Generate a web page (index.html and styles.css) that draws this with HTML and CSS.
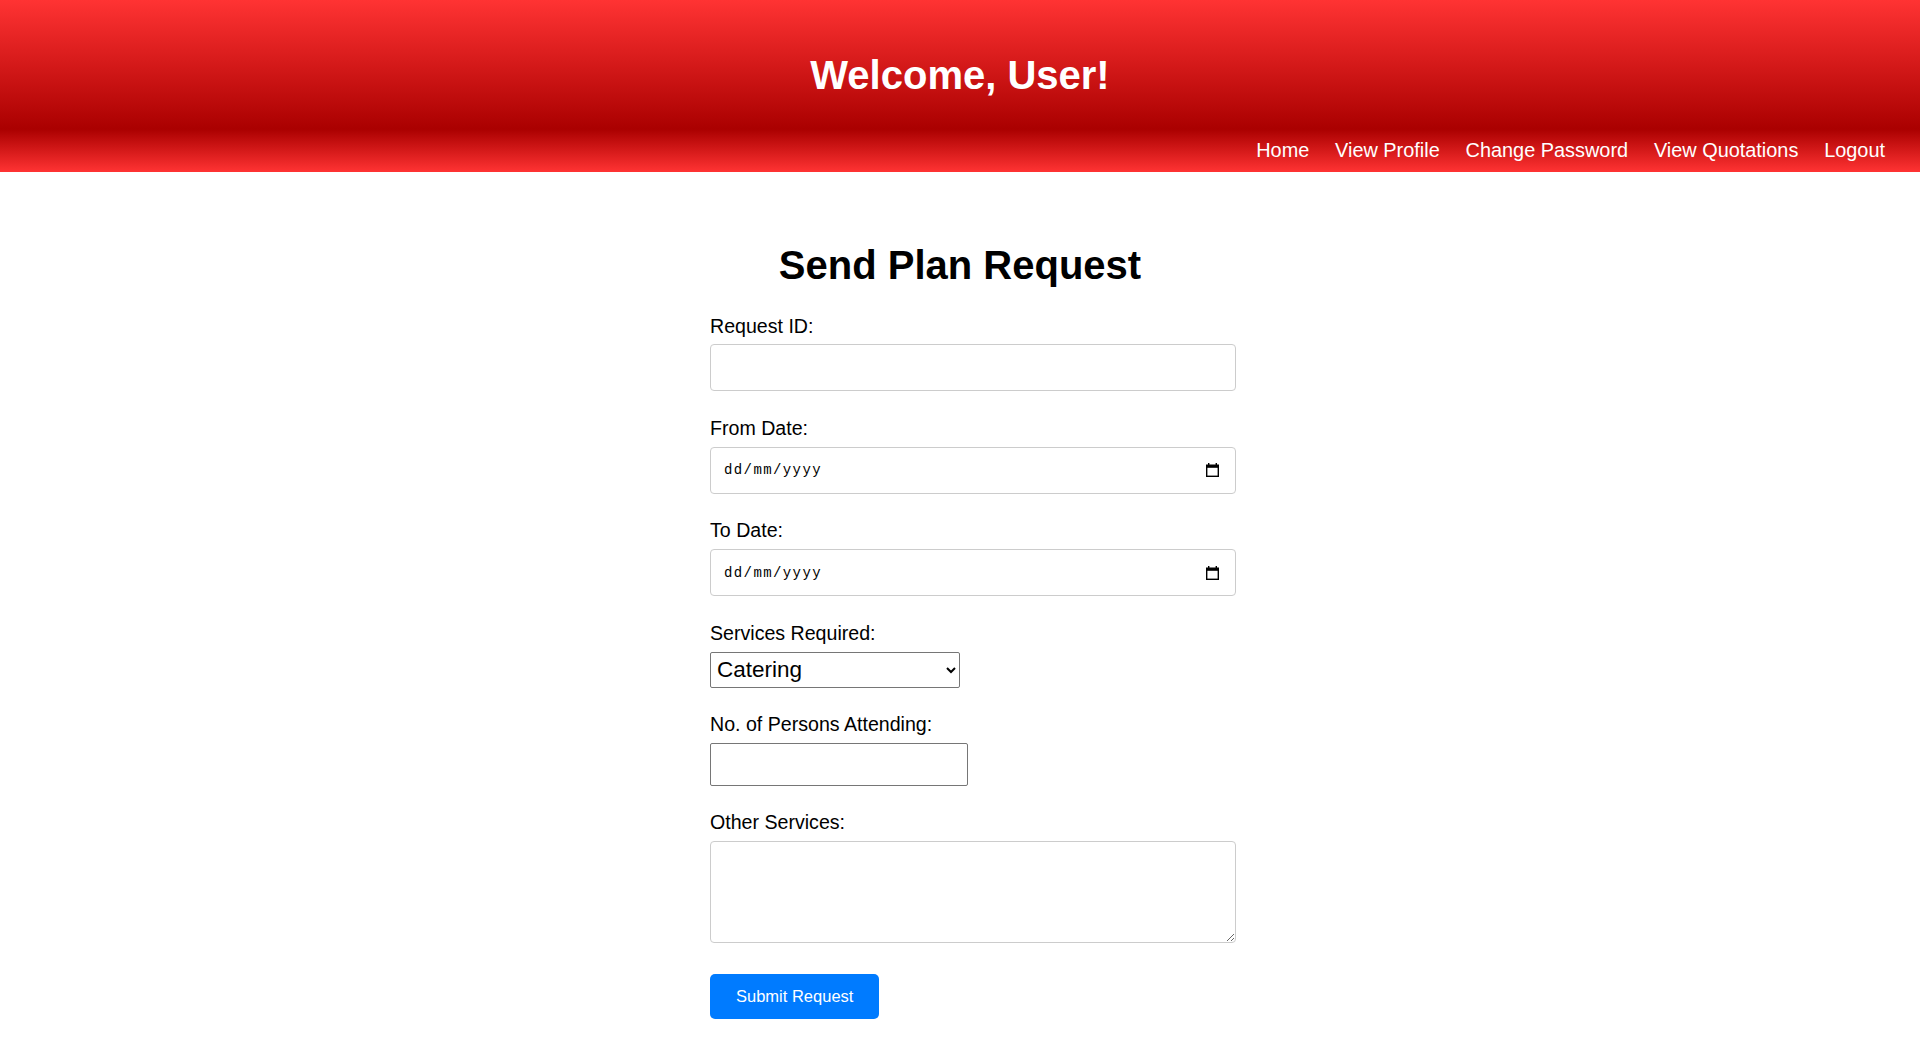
FILE: index.html
```html
<!DOCTYPE html>
<html lang="en">
<head>
<meta charset="utf-8">
<title>Send Plan Request</title>
<link rel="stylesheet" href="styles.css">
</head>
<body>
<header class="header">
  <h1 class="header-title">Welcome, User!</h1>
</header>
<nav class="nav">
  <a class="nav-link" href="#">Home</a>
  <a class="nav-link" href="#">View Profile</a>
  <a class="nav-link" href="#">Change Password</a>
  <a class="nav-link" href="#">View Quotations</a>
  <a class="nav-link" href="#">Logout</a>
</nav>
<main class="main">
  <h2 class="page-title">Send Plan Request</h2>
  <form class="form">
    <label class="label" for="rid">Request ID:</label>
    <input class="field" id="rid" type="text">

    <label class="label" for="from">From Date:</label>
    <div class="date-wrap">
      <input class="field date" id="from" type="text" placeholder="dd/mm/yyyy">
      <svg class="cal-icon" width="13" height="14" viewBox="0 0 13 14" aria-hidden="true">
        <rect x="2" y="0" width="1.4" height="2.5" fill="#000"/>
        <rect x="9.6" y="0" width="1.4" height="2.5" fill="#000"/>
        <rect x="0.7" y="2.2" width="11.6" height="11.1" fill="none" stroke="#000" stroke-width="1.4"/>
        <rect x="0.7" y="2.2" width="11.6" height="2.6" fill="#000"/>
      </svg>
    </div>

    <label class="label" for="to">To Date:</label>
    <div class="date-wrap">
      <input class="field date" id="to" type="text" placeholder="dd/mm/yyyy">
      <svg class="cal-icon" width="13" height="14" viewBox="0 0 13 14" aria-hidden="true">
        <rect x="2" y="0" width="1.4" height="2.5" fill="#000"/>
        <rect x="9.6" y="0" width="1.4" height="2.5" fill="#000"/>
        <rect x="0.7" y="2.2" width="11.6" height="11.1" fill="none" stroke="#000" stroke-width="1.4"/>
        <rect x="0.7" y="2.2" width="11.6" height="2.6" fill="#000"/>
      </svg>
    </div>

    <label class="label" for="svc">Services Required:</label>
    <select class="select" id="svc">
      <option>Catering</option>
      <option>Decoration</option>
      <option>Photography</option>
    </select>

    <label class="label" for="persons">No. of Persons Attending:</label>
    <input class="number" id="persons" type="number">

    <label class="label" for="other">Other Services:</label>
    <textarea class="field textarea" id="other"></textarea>

    <button class="submit" type="button">Submit Request</button>
  </form>
</main>
</body>
</html>
```
FILE: styles.css
```css
html, body {
  margin: 0;
  padding: 0;
  background: #ffffff;
  font-family: "Liberation Sans", Arial, sans-serif;
  color: #000;
}

.header {
  height: 109px;
  padding-top: 20px;
  display: flex;
  align-items: center;
  justify-content: center;
  background: linear-gradient(to bottom, #ff3333, #aa0000);
}

.header-title {
  margin: 0;
  color: #ffffff;
  font-size: 40px;
  font-weight: bold;
  line-height: 46px;
}

.nav {
  height: 43px;
  display: flex;
  align-items: center;
  justify-content: flex-end;
  gap: 25.8px;
  padding-right: 35px;
  background: linear-gradient(to bottom, #aa0000, #ff3333);
}

.nav-link {
  color: #ffffff;
  text-decoration: none;
  font-size: 19.9px;
  line-height: 23px;
  margin-top: -1px;
}

.main {
  width: 500px;
  margin: 0 auto;
  padding-top: 70px;
  padding-bottom: 20px;
}

.page-title {
  margin: 0 0 26.5px;
  text-align: center;
  font-size: 40px;
  line-height: 46px;
  font-weight: bold;
}

.form {
  display: flex;
  flex-direction: column;
  align-items: flex-start;
}

.label {
  display: block;
  font-size: 19.6px;
  line-height: 23px;
  margin-bottom: 6.9px;
}

.field {
  display: block;
  box-sizing: border-box;
  width: 526px;
  height: 47px;
  padding: 0 12px;
  margin: 0 0 25.5px;
  border: 1px solid #cccccc;
  border-radius: 4px;
  background: #fff;
  font-family: "Liberation Sans", Arial, sans-serif;
  font-size: 16px;
  outline: none;
}

.date-wrap {
  position: relative;
  width: 526px;
  height: 47px;
  margin-bottom: 25.5px;
}

.date {
  margin: 0;
  padding-left: 13px;
  font-family: "Liberation Mono", "DejaVu Sans Mono", monospace;
  font-size: 14px;
  letter-spacing: 1.4px;
  color: #000;
}

.date::placeholder {
  color: #000;
  opacity: 1;
}

.cal-icon {
  position: absolute;
  right: 17px;
  top: 16.5px;
}

.select {
  display: block;
  box-sizing: border-box;
  width: 250px;
  height: 36px;
  margin: 0 0 25.5px;
  padding: 0 2px;
  border: 1px solid #767676;
  border-radius: 2px;
  background: #fff;
  color: #000;
  font-family: "Liberation Sans", Arial, sans-serif;
  font-size: 22.5px;
}

.number {
  display: block;
  box-sizing: border-box;
  width: 258px;
  height: 43px;
  margin: 0 0 25.5px;
  padding: 0 10px;
  border: 1px solid #767676;
  border-radius: 2px;
  background: #fff;
  font-family: "Liberation Sans", Arial, sans-serif;
  font-size: 16px;
}

.textarea {
  height: 102px;
  margin-bottom: 30.5px;
  resize: both;
}

.submit {
  height: 45px;
  padding: 0 26px;
  border: none;
  border-radius: 5px;
  background: #007bff;
  color: #ffffff;
  font-family: "Liberation Sans", Arial, sans-serif;
  font-size: 16.5px;
  cursor: pointer;
}
```
